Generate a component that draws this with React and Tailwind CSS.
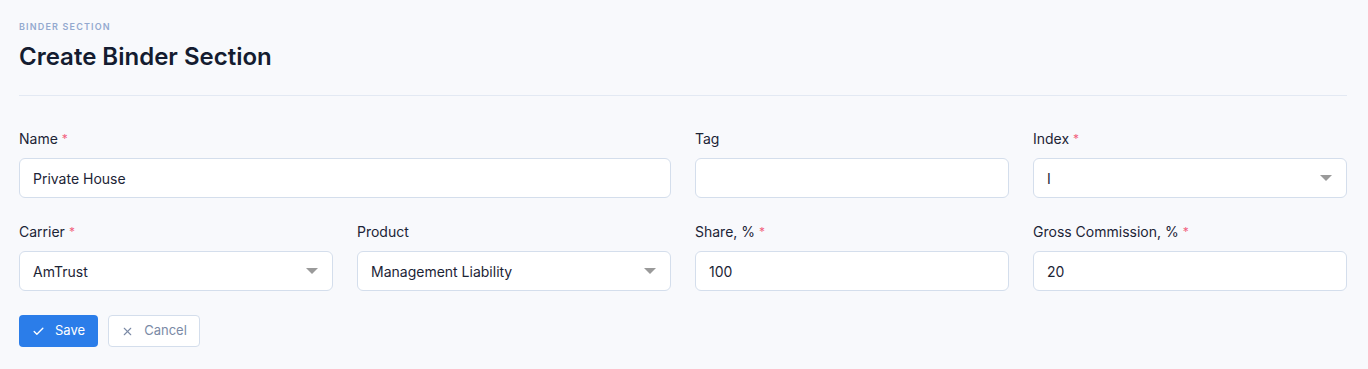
import React from 'react';
import { Check, X } from 'lucide-react';

const Label = ({ children, required }) => (
  <label className="block h-5 mb-[9px] text-[14px] leading-5 text-[#1c2436]">
    {children}
    {required && <span className="ml-1 text-[#f2627e] text-[12px] align-top">*</span>}
  </label>
);

const Input = ({ value }) => (
  <div className="h-10 w-full rounded-md border border-[#d4deec] bg-white px-[13px] flex items-center text-[14px] text-[#1c2436]">
    {value}
  </div>
);

const Select = ({ value }) => (
  <div className="h-10 w-full rounded-md border border-[#d4deec] bg-white pl-[13px] pr-[14px] flex items-center justify-between text-[14px] text-[#1c2436]">
    <span>{value}</span>
    <svg width="12" height="6" viewBox="0 0 12 6">
      <path d="M0 0 L12 0 L6 6 Z" fill="#9a9a9a" />
    </svg>
  </div>
);

const Field = ({ label, required, className = '', children }) => (
  <div className={className}>
    <Label required={required}>{label}</Label>
    {children}
  </div>
);

export default function App() {
  return (
    <div
      className="min-h-screen bg-[#f8f9fc] pl-[19px] pr-[21px] pt-[21px] pb-6"
      style={{ fontFamily: 'Inter, "Noto Sans", sans-serif' }}
    >
      <div className="border-b border-[#e3e9f3] pb-[22px]">
        <div className="text-[9px] leading-3 font-semibold tracking-[0.13em] text-[#94a9cf] uppercase">Binder Section</div>
        <h1 className="mt-2 text-[24px] leading-8 font-semibold text-[#141c30]">Create Binder Section</h1>
      </div>

      <div className="mt-[33px] grid grid-cols-4 gap-x-6 gap-y-6">
        <Field label="Name" required className="col-span-2">
          <Input value="Private House" />
        </Field>
        <Field label="Tag">
          <Input value="" />
        </Field>
        <Field label="Index" required>
          <Select value="I" />
        </Field>

        <Field label="Carrier" required>
          <Select value="AmTrust" />
        </Field>
        <Field label="Product">
          <Select value="Management Liability" />
        </Field>
        <Field label="Share, %" required>
          <Input value="100" />
        </Field>
        <Field label="Gross Commission, %" required>
          <Input value="20" />
        </Field>
      </div>

      <div className="mt-6 flex gap-[10px]">
        <button type="button" className="h-8 w-[79px] rounded bg-[#2b7de9] text-white text-[13px] flex items-center justify-center gap-[10px]">
          <Check size={13} strokeWidth={2.5} />
          Save
        </button>
        <button type="button" className="h-8 w-[92px] rounded border border-[#d4deec] bg-white text-[#7b8aa6] text-[13px] flex items-center justify-center gap-[10px]">
          <X size={13} strokeWidth={2} />
          Cancel
        </button>
      </div>
    </div>
  );
}
